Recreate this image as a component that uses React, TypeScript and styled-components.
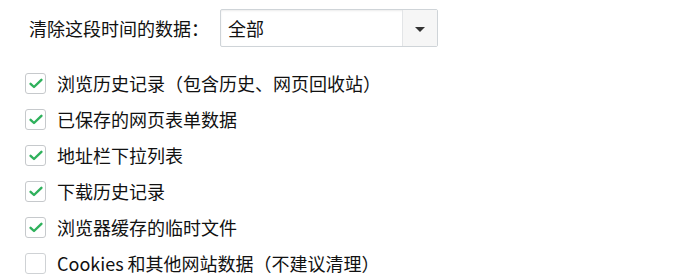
import React from "react";
import styled, { createGlobalStyle } from "styled-components";

const GlobalStyle = createGlobalStyle`
  body {
    margin: 0;
    background: #ffffff;
    font-family: "Microsoft YaHei", "Noto Sans CJK SC", "Noto Sans", sans-serif;
    color: #111;
  }
`;

const Page = styled.div`
  width: 682px;
  height: 280px;
  padding: 9px 0 0 29px;
  box-sizing: border-box;
`;

const RangeRow = styled.div`
  display: flex;
  align-items: center;
  height: 38px;
`;

const RangeLabel = styled.span`
  font-size: 18px;
  width: 191px;
  white-space: nowrap;
`;

const Select = styled.div`
  display: flex;
  width: 218px;
  height: 38px;
  box-sizing: border-box;
  border: 1px solid #cfd4d8;
  border-radius: 2px;
  box-shadow: inset 0 1px 2px rgba(0, 0, 0, 0.08);
  background: #fff;
`;

const SelectValue = styled.div`
  flex: 1;
  display: flex;
  align-items: center;
  padding-left: 7px;
  font-size: 18px;
`;

const SelectArrow = styled.div`
  width: 34px;
  display: flex;
  align-items: center;
  justify-content: center;
  border-left: 1px solid #e3e5e7;
  background: #f6f6f6;

  &::after {
    content: "";
    border-left: 5px solid transparent;
    border-right: 5px solid transparent;
    border-top: 5px solid #333;
    margin-top: 2px;
  }
`;

const List = styled.div`
  display: flex;
  flex-direction: column;
  margin: 18px 0 0 -4px;
`;

const Item = styled.label`
  display: flex;
  align-items: center;
  height: 36px;
  gap: 11px;
  font-size: 18px;
  white-space: nowrap;
`;

const Box = styled.span<{ $checked: boolean }>`
  width: 21px;
  height: 21px;
  flex: none;
  box-sizing: border-box;
  border: 1.5px solid ${(p) => (p.$checked ? "#c6c9cc" : "#cfd2d5")};
  border-radius: 3px;
  background: #fff;
  display: flex;
  align-items: center;
  justify-content: center;
`;

const items = [
  { text: "浏览历史记录（包含历史、网页回收站）", checked: true },
  { text: "已保存的网页表单数据", checked: true },
  { text: "地址栏下拉列表", checked: true },
  { text: "下载历史记录", checked: true },
  { text: "浏览器缓存的临时文件", checked: true },
  { text: "Cookies 和其他网站数据（不建议清理）", checked: false },
];

const Check = () => (
  <svg width="14" height="11" viewBox="0 0 14 11">
    <path d="M1.6 5.8 L5 9 L12.4 1.8" fill="none" stroke="#2fb15c" strokeWidth="2.4" strokeLinecap="round" strokeLinejoin="round" />
  </svg>
);

export default function App() {
  return (
    <>
      <GlobalStyle />
      <Page>
        <RangeRow>
          <RangeLabel>清除这段时间的数据：</RangeLabel>
          <Select>
            <SelectValue>全部</SelectValue>
            <SelectArrow />
          </Select>
        </RangeRow>
        <List>
          {items.map((it) => (
            <Item key={it.text}>
              <Box $checked={it.checked}>{it.checked && <Check />}</Box>
              {it.text}
            </Item>
          ))}
        </List>
      </Page>
    </>
  );
}
